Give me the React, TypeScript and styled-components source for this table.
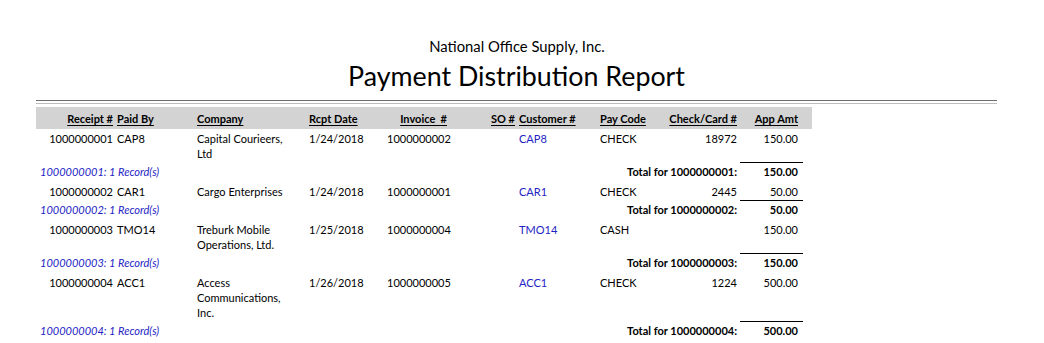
import React from "react";
import styled, { createGlobalStyle } from "styled-components";

const Global = createGlobalStyle`
  html, body { margin: 0; padding: 0; background: #ffffff; }
  body { font-family: Lato, "Open Sans", "Liberation Sans", sans-serif; color: #000; }
`;

const Page = styled.div`
  width: 961px;
  margin-left: 36px;
  padding-top: 37px;
`;

const CompanyName = styled.div`
  text-align: center;
  font-size: 14.8px;
  line-height: 18px;
  padding-left: 1px;
`;

const ReportTitle = styled.h1`
  margin: 6px 0 0;
  text-align: center;
  font-weight: 400;
  font-size: 26.8px;
  line-height: 30px;
`;

const DoubleRule = styled.div`
  margin-top: 9px;
  height: 2px;
  border-top: 1px solid #6e6e6e;
  border-bottom: 1px solid #bdbdbd;
`;

const Table = styled.div`
  width: 776px;
  margin-top: 3px;
  font-size: 11px;
`;

const cols = "79px 80px 112px 78px 64px 68px 81px 62px 79px 64px 9px";

const HeaderRow = styled.div`
  display: grid;
  grid-template-columns: ${cols};
  background: #d3d3d3;
  height: 22px;
  align-items: center;
  font-weight: 700;
`;

const DetailRow = styled.div`
  display: grid;
  grid-template-columns: ${cols};
  padding: 2px 0 1px;
  line-height: 15px;
`;

const FooterRow = styled.div`
  display: grid;
  grid-template-columns: ${cols};
  line-height: 15px;
  padding-bottom: 3px;
`;

const Cell = styled.div<{ $align?: "left" | "right"; $pad?: number; $blue?: boolean }>`
  text-align: ${(p) => p.$align ?? "left"};
  ${(p) =>
    (p.$align ?? "left") === "left"
      ? `padding-left: ${p.$pad ?? 2}px; padding-right: 2px;`
      : `padding-right: ${p.$pad ?? 2}px;`}
  color: ${(p) => (p.$blue ? "#2323c4" : "#000")};
  white-space: ${(p) => (p.$align === "right" ? "nowrap" : "normal")};
`;

const CompanyCell = styled.div`
  padding: 0 15px 0 2px;
`;

const HeadLabel = styled.span`
  text-decoration: underline;
  text-underline-offset: 2px;
  white-space: pre;
`;

const GroupLabel = styled.div`
  grid-column: 1 / 5;
  padding: 2px 0 0 4px;
  font-style: italic;
  color: #2323c4;
`;

const TotalLabel = styled.div`
  grid-column: 5 / 10;
  padding: 2px 2px 0 0;
  text-align: right;
  font-weight: 700;
`;

const TotalAmount = styled.div`
  grid-column: 10 / 11;
  margin-left: 1px;
  padding: 1px 5px 0 0;
  border-top: 1px solid #000;
  text-align: right;
  font-weight: 700;
`;

type Rec = {
  receipt: string;
  paidBy: string;
  company: string;
  date: string;
  invoice: string;
  customer: string;
  payCode: string;
  check: string;
  amount: string;
};

const records: Rec[] = [
  { receipt: "1000000001", paidBy: "CAP8", company: "Capital Courieers, Ltd", date: "1/24/2018", invoice: "1000000002", customer: "CAP8", payCode: "CHECK", check: "18972", amount: "150.00" },
  { receipt: "1000000002", paidBy: "CAR1", company: "Cargo Enterprises", date: "1/24/2018", invoice: "1000000001", customer: "CAR1", payCode: "CHECK", check: "2445", amount: "50.00" },
  { receipt: "1000000003", paidBy: "TMO14", company: "Treburk Mobile Operations, Ltd.", date: "1/25/2018", invoice: "1000000004", customer: "TMO14", payCode: "CASH", check: "", amount: "150.00" },
  { receipt: "1000000004", paidBy: "ACC1", company: "Access Communications, Inc.", date: "1/26/2018", invoice: "1000000005", customer: "ACC1", payCode: "CHECK", check: "1224", amount: "500.00" },
];

const headers: { label: string; align: "left" | "right"; pad?: number }[] = [
  { label: "Receipt #", align: "right" },
  { label: "Paid By", align: "left" },
  { label: "Company", align: "left" },
  { label: "Rcpt Date", align: "left" },
  { label: "Invoice  #", align: "right" },
  { label: "SO #", align: "right" },
  { label: "Customer #", align: "left" },
  { label: "Pay Code", align: "left" },
  { label: "Check/Card #", align: "right" },
  { label: "App Amt", align: "right", pad: 5 },
];

export default function App() {
  return (
    <>
      <Global />
      <Page>
        <CompanyName>National Office Supply, Inc.</CompanyName>
        <ReportTitle>Payment Distribution Report</ReportTitle>
        <DoubleRule />
        <Table>
          <HeaderRow>
            {headers.map((h) => (
              <Cell key={h.label} $align={h.align} $pad={h.pad}>
                <HeadLabel>{h.label}</HeadLabel>
              </Cell>
            ))}
            <Cell />
          </HeaderRow>
          {records.map((r) => (
            <React.Fragment key={r.receipt}>
              <DetailRow>
                <Cell $align="right">{r.receipt}</Cell>
                <Cell>{r.paidBy}</Cell>
                <CompanyCell>{r.company}</CompanyCell>
                <Cell>{r.date}</Cell>
                <Cell>{r.invoice}</Cell>
                <Cell $align="right"></Cell>
                <Cell $blue>{r.customer}</Cell>
                <Cell>{r.payCode}</Cell>
                <Cell $align="right">{r.check}</Cell>
                <Cell $align="right" $pad={5}>{r.amount}</Cell>
                <Cell />
              </DetailRow>
              <FooterRow>
                <GroupLabel>{r.receipt}: 1 Record(s)</GroupLabel>
                <TotalLabel>Total for {r.receipt}:</TotalLabel>
                <TotalAmount>{r.amount}</TotalAmount>
              </FooterRow>
            </React.Fragment>
          ))}
        </Table>
      </Page>
    </>
  );
}
